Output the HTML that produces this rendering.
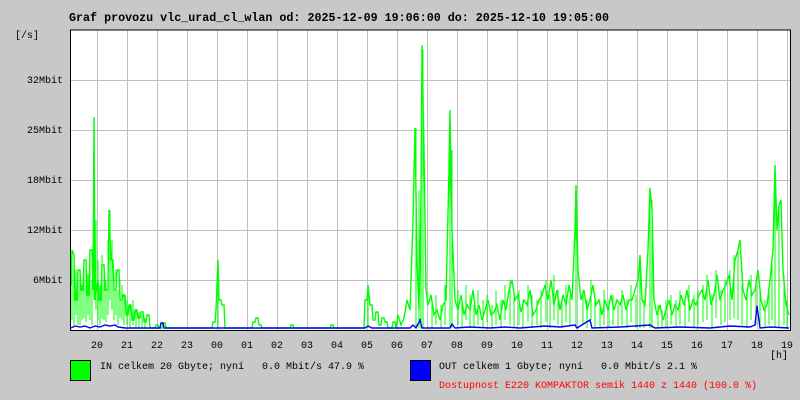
<!DOCTYPE html>
<html><head><meta charset="utf-8"><style>
html,body{margin:0;padding:0;}
body{width:800px;height:400px;background:#c8c8c8;position:relative;overflow:hidden;font-family:"Liberation Mono","DejaVu Sans Mono",monospace;font-size:10px;color:#000;}
.t{position:absolute;white-space:pre;line-height:12px;}
.h{width:12px;text-align:center;}
</style></head><body>
<div class="t" style="left:69px;top:12px;font-weight:bold;font-size:11.7px;">Graf provozu vlc_urad_cl_wlan od: 2025-12-09 19:06:00 do: 2025-12-10 19:05:00</div>
<div class="t" style="left:15px;top:31px;">[/s]</div>
<div class="t" style="left:27px;top:76px;">32Mbit</div>
<div class="t" style="left:27px;top:126px;">25Mbit</div>
<div class="t" style="left:27px;top:176px;">18Mbit</div>
<div class="t" style="left:27px;top:226px;">12Mbit</div>
<div class="t" style="left:33px;top:276px;">6Mbit</div>
<svg style="position:absolute;left:0;top:0" width="800" height="400">
<rect x="70" y="30" width="720" height="300" fill="#fff"/>
<g stroke="#c0c0c0" stroke-width="1">
<path d="M97.5 30V330M127.5 30V330M157.5 30V330M187.5 30V330M217.5 30V330M247.5 30V330M277.5 30V330M307.5 30V330M337.5 30V330M367.5 30V330M397.5 30V330M427.5 30V330M457.5 30V330M487.5 30V330M517.5 30V330M547.5 30V330M577.5 30V330M607.5 30V330M637.5 30V330M667.5 30V330M697.5 30V330M727.5 30V330M757.5 30V330M787.5 30V330"/>
<path d="M70 80.5H790M70 130.5H790M70 180.5H790M70 230.5H790M70 280.5H790"/>
</g>
<polyline fill="none" stroke="#00ff00" stroke-width="1.4" points="71,285 72,250 74,255 75,300 77,300 78,270 80,270 81,290 83,290 84,260 86,260 87,295 89,295 90,250 92,250 93,290 94,117 95,300 98,280 99,300 101,300 102,265 104,265 105,290 107,290 108,290 109,210 111,260 113,260 114,290 116,290 117,270 119,270 120,300 122,300 123,295 125,295 126,315 128,315 129,305 131,305 132,320 134,320 135,310 137,310 138,318 140,318 141,312 143,312 144,322 146,322 147,315 149,315 150,328 155,328 156,325 158,325 159,328 162,328 163,323 165,323 166,328 212,328 213,322 215,322 216,310 218,260 219,300 221,300 222,305 224,305 225,328 252,328 253,322 255,322 256,318 258,318 259,325 261,325 262,328 290,328 291,325 293,325 294,328 330,328 331,325 333,325 334,328 364,328 365,300 367,300 368,285 370,305 372,305 373,320 375,320 376,312 378,312 379,325 381,325 382,318 384,318 385,322 387,322 388,328 392,328 393,322 395,322 396,328 398,315 401,325 404,318 407,300 410,310 413,220 415,128 417,260 419,310 421,200 422,45 424,150 426,290 428,305 431,295 434,315 437,310 440,320 443,305 446,300 449,170 450,110 452,230 455,300 458,310 461,295 464,315 467,305 470,310 473,290 476,315 479,305 482,320 485,310 488,300 491,315 494,312 497,305 500,320 503,300 506,310 509,290 512,280 515,300 518,295 521,312 524,300 527,305 530,290 533,315 536,310 539,300 542,295 545,285 548,300 551,280 554,305 557,290 560,310 563,295 566,305 569,285 572,300 575,230 576,185 578,270 581,300 584,290 587,310 590,300 593,285 596,305 599,300 602,315 605,300 608,310 611,295 614,310 617,300 620,305 623,295 626,310 629,300 632,300 635,290 638,280 640,255 642,300 645,305 648,250 650,188 652,210 654,300 657,315 660,305 663,320 666,310 669,300 672,315 675,305 678,310 681,295 684,305 687,290 690,310 693,300 696,305 699,295 702,290 705,300 708,280 711,305 714,295 717,275 720,300 723,290 726,285 729,275 732,300 735,260 738,250 740,240 743,290 746,300 749,280 752,295 755,290 758,270 761,300 764,310 767,305 770,280 773,250 775,165 777,230 779,205 781,200 783,270 786,305 789,315"/>
<g stroke="#00ff00" stroke-width="1">
<path d="M72 250V320M74 255V325M76 270V315M78 280V325M80 270V325M82 285V320M84 265V318M86 260V322M88 275V315M90 250V320M92 280V325M94 117V300M96 220V310M98 260V320M100 285V325M102 255V318M104 265V320M106 280V322M108 240V315M110 210V300M112 240V310M114 275V320M116 270V315M118 290V325M120 280V318M122 285V320M124 295V325M127 300V325M130 305V328M133 300V325M136 310V328M139 312V328M142 316V328M145 318V328"/>
<path d="M419 190V328M421 150V328M423 50V328M416 128V328M450 110V328M452 150V328M576 185V328M650 188V328M652 200V328M775 165V328M779 205V328M738 250V320M640 255V328M218 260V328M368 285V328"/>
<path d="M432 300V328M436 295V325M441 305V328M445 285V325M458 290V325M462 300V328M466 285V320M470 295V328M474 305V328M478 290V325M483 300V328M487 295V322M492 305V328M496 290V325M501 300V328M505 285V320M510 280V325M514 295V328M519 290V325M523 300V328M528 285V322M532 295V328M537 300V325M541 290V328M546 280V322M550 295V328M554 275V320M558 290V325M562 300V328M566 285V322M570 295V325M583 290V325M587 300V328M591 280V320M595 295V328M600 305V328M604 290V325M609 300V328M613 295V325M618 305V328M622 290V325M627 300V328M631 285V322M636 295V328M644 300V328M658 305V328M662 310V328M666 300V328M671 295V325M676 300V328M680 290V325M685 300V328M689 285V322M694 295V328M698 290V325M703 285V322M707 275V320M712 295V328M716 270V318M721 290V325M725 280V322M730 270V320M734 255V318M742 285V325M747 290V328M751 275V320M756 285V325M760 290V328M765 300V328M769 285V325M772 260V320M784 275V325M787 300V328"/>
</g>
<polyline fill="none" stroke="#0000ff" stroke-width="1.4" points="71,328 75,326 80,327 85,326 90,328 95,326 100,327 105,325 110,326 115,325 118,327 125,328 160,328 161,323 163,323 164,328 365,328 368,326 372,328 410,328 413,325 416,328 420,320 422,328 450,328 452,324 455,328 470,327 490,328 505,327 520,328 545,326 560,327 575,325 577,328 590,320 592,328 620,327 650,325 655,328 680,327 710,328 730,326 750,327 755,325 757,306 760,328 770,327 789,328"/>
<path d="M70.5 30V330.5H790.5V30H70" fill="none" stroke="#000" stroke-width="1"/>
<rect x="70.5" y="360.5" width="20" height="20" fill="#00ff00" stroke="#000"/>
<rect x="410.5" y="360.5" width="20" height="20" fill="#0000ff" stroke="#000"/>
</svg>
<div class="t h" style="left:91px;top:341px;">20</div>
<div class="t h" style="left:121px;top:341px;">21</div>
<div class="t h" style="left:151px;top:341px;">22</div>
<div class="t h" style="left:181px;top:341px;">23</div>
<div class="t h" style="left:211px;top:341px;">00</div>
<div class="t h" style="left:241px;top:341px;">01</div>
<div class="t h" style="left:271px;top:341px;">02</div>
<div class="t h" style="left:301px;top:341px;">03</div>
<div class="t h" style="left:331px;top:341px;">04</div>
<div class="t h" style="left:361px;top:341px;">05</div>
<div class="t h" style="left:391px;top:341px;">06</div>
<div class="t h" style="left:421px;top:341px;">07</div>
<div class="t h" style="left:451px;top:341px;">08</div>
<div class="t h" style="left:481px;top:341px;">09</div>
<div class="t h" style="left:511px;top:341px;">10</div>
<div class="t h" style="left:541px;top:341px;">11</div>
<div class="t h" style="left:571px;top:341px;">12</div>
<div class="t h" style="left:601px;top:341px;">13</div>
<div class="t h" style="left:631px;top:341px;">14</div>
<div class="t h" style="left:661px;top:341px;">15</div>
<div class="t h" style="left:691px;top:341px;">16</div>
<div class="t h" style="left:721px;top:341px;">17</div>
<div class="t h" style="left:751px;top:341px;">18</div>
<div class="t h" style="left:781px;top:341px;">19</div>
<div class="t" style="left:770px;top:351px;">[h]</div>
<div class="t" style="left:100px;top:362px;">IN celkem 20 Gbyte; nyní   0.0 Mbit/s 47.9 %</div>
<div class="t" style="left:439px;top:362px;">OUT celkem 1 Gbyte; nyní   0.0 Mbit/s 2.1 %</div>
<div class="t" style="left:439px;top:381px;color:#ff0000;">Dostupnost E220 KOMPAKTOR semik 1440 z 1440 (100.0 %)</div>
</body></html>
